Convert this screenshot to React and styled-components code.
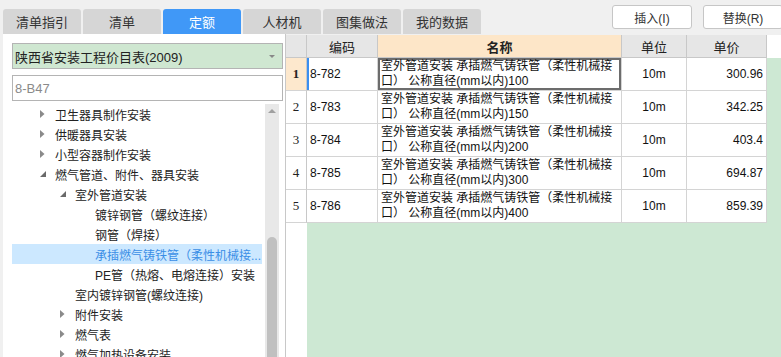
import styled, { createGlobalStyle } from "styled-components";

const GlobalStyle = createGlobalStyle`
  html, body {
    margin: 0;
    padding: 0;
    background: #f0f0f0;
    font-family: "Liberation Sans", "Noto Sans CJK SC", sans-serif;
    font-size: 12px;
    color: #222;
  }
`;

const Page = styled.div`
  width: 781px;
  height: 357px;
  display: flex;
  flex-direction: column;
  overflow: hidden;
  background: #f0f0f0;
`;

const TopBar = styled.div`
  height: 34px;
  display: flex;
  padding-left: 3px;
  flex-shrink: 0;
`;

const Tabs = styled.div`
  display: flex;
  align-items: flex-end;
  gap: 2px;
`;

const Tab = styled.div`
  width: 78px;
  height: 25px;
  display: flex;
  align-items: center;
  justify-content: center;
  border-radius: 3px 3px 0 0;
  background: ${(p) => (p.$active ? "#4098f7" : "#d6d6d6")};
  color: ${(p) => (p.$active ? "#fff" : "#333")};
  font-size: 13px;
`;

const Actions = styled.div`
  margin-left: auto;
  margin-right: -2px;
  padding-top: 5px;
  display: flex;
  gap: 11px;
`;

const Button = styled.div`
  width: 78px;
  height: 22px;
  border: 1px solid #c6c6c6;
  border-radius: 3px;
  background: #fff;
  display: flex;
  align-items: center;
  justify-content: center;
  font-size: 12px;
  color: #333;
`;

const Body = styled.div`
  flex: 1;
  display: flex;
  min-height: 0;
`;

const LeftPanel = styled.div`
  margin-left: 3px;
  width: 273px;
  padding: 9px 0 0 9px;
  background: #fff;
  border-right: 1px solid #c8c8c8;
  display: flex;
  flex-direction: column;
`;

const Select = styled.div`
  width: 265px;
  height: 24px;
  border: 1px solid #b4b4b4;
  background: #cfe7d1;
  display: flex;
  align-items: center;
  padding: 0 2px;
  box-sizing: content-box;
  font-size: 13px;
  margin-left: 0;
  position: relative;
  & > span {
    flex: 1;
  }
`;

const Caret = styled.i`
  width: 0;
  height: 0;
  border-left: 3px solid transparent;
  border-right: 3px solid transparent;
  border-top: 3px solid #888;
  margin-right: 5px;
`;

const SearchBox = styled.div`
  margin-top: 6px;
  width: 265px;
  height: 24px;
  border: 1px solid #b4b4b4;
  padding: 0 2px;
  display: flex;
  align-items: center;
  color: #8a8a8a;
  font-size: 13px;
  box-sizing: content-box;
`;

const TreeArea = styled.div`
  margin-top: 3px;
  flex: 1;
  display: flex;
  min-height: 0;
`;

const TreeList = styled.div`
  width: 250px;
  display: flex;
  flex-direction: column;
`;

const TreeRow = styled.div`
  height: 20px;
  flex-shrink: 0;
  display: flex;
  align-items: center;
  padding-left: ${(p) => 28 + p.$level * 20}px;
  background: ${(p) => (p.$selected ? "#cce8ff" : "transparent")};
  color: ${(p) => (p.$selected ? "#3a8ee6" : "#222")};
  font-size: 12px;
  white-space: nowrap;
`;

const Toggle = styled.span`
  width: 15px;
  flex-shrink: 0;
  display: flex;
  align-items: center;
`;

const ScrollBar = styled.div`
  margin-left: 3px;
  width: 14px;
  background: #e8e8e8;
  display: flex;
  flex-direction: column;
  align-items: center;
`;

const ScrollArrow = styled.i`
  margin-top: 5px;
  width: 0;
  height: 0;
  border-left: 4px solid transparent;
  border-right: 4px solid transparent;
  border-bottom: 4px solid #a0a0a0;
`;

const ScrollThumb = styled.div`
  margin-top: 124px;
  width: 10px;
  flex: 1;
  border-radius: 5px 5px 0 0;
  background: #c0c0c0;
`;

const RightPanel = styled.div`
  flex: 1;
  display: flex;
  flex-direction: column;
  background: #fff;
  margin-top: 1px;
`;

const Grid = styled.div`
  display: grid;
  grid-template-columns: 21px 71px 244px 65px 80px 1fr;
`;

const HeadCell = styled.div`
  height: 22px;
  display: flex;
  align-items: center;
  justify-content: center;
  background: ${(p) => (p.$hot ? "#fde6c8" : "#e6e6e6")};
  font-weight: ${(p) => (p.$hot ? 700 : 400)};
  border-right: 1px solid #c8c8c8;
  border-bottom: 1px solid #c8c8c8;
  font-size: 13px;
  color: #222;
`;

const HeadFill = styled.div`
  background: #fff;
`;

const NumCell = styled.div`
  height: 32px;
  display: flex;
  align-items: center;
  justify-content: center;
  background: ${(p) => (p.$active ? "#fde8cd" : "#fff")};
  font-family: "Liberation Serif", serif;
  font-size: 13px;
  font-weight: ${(p) => (p.$active ? 700 : 400)};
  border-right: 1px solid #c8c8c8;
  border-bottom: 1px solid #d4d4d4;
`;

const Cell = styled.div`
  height: 32px;
  display: flex;
  align-items: center;
  justify-content: ${(p) => p.$align || "flex-start"};
  padding: 0 3px;
  border-right: 1px solid #d4d4d4;
  border-bottom: 1px solid #d4d4d4;
  font-size: 12px;
  line-height: 15px;
  color: #111;
  overflow: hidden;
  box-shadow: ${(p) =>
    p.$mark ? "inset 2px 0 #3b8ef0" : p.$focus ? "inset 0 0 0 2px #6c6c6c" : "none"};
`;

const NameText = styled.div`
  white-space: pre;
`;

const RowFill = styled.div`
  background: #cde8d3;
`;

const Filler = styled.div`
  flex: 1;
  display: flex;
`;

const FillerNum = styled.div`
  width: 21px;
  background: #fff;
`;

const FillerData = styled.div`
  flex: 1;
  background: #cde8d3;
`;

const tabs = ["清单指引", "清单", "定额", "人材机", "图集做法", "我的数据"];

const tree = [
  { level: 0, label: "卫生器具制作安装", state: "closed" },
  { level: 0, label: "供暖器具安装", state: "closed" },
  { level: 0, label: "小型容器制作安装", state: "closed" },
  { level: 0, label: "燃气管道、附件、器具安装", state: "open" },
  { level: 1, label: "室外管道安装", state: "open" },
  { level: 2, label: "镀锌钢管（螺纹连接）" },
  { level: 2, label: "钢管（焊接）" },
  { level: 2, label: "承插燃气铸铁管（柔性机械接...", selected: true },
  { level: 2, label: "PE管（热熔、电熔连接）安装" },
  { level: 1, label: "室内镀锌钢管(螺纹连接)" },
  { level: 1, label: "附件安装", state: "closed" },
  { level: 1, label: "燃气表", state: "closed" },
  { level: 1, label: "燃气加热设备安装", state: "closed" },
];

const rows = [
  { code: "8-782", size: "100", price: "300.96" },
  { code: "8-783", size: "150", price: "342.25" },
  { code: "8-784", size: "200", price: "403.4" },
  { code: "8-785", size: "300", price: "694.87" },
  { code: "8-786", size: "400", price: "859.39" },
];

const ToggleIcon = ({ state }) => {
  if (state === "closed") {
    return (
      <svg width="5" height="8" viewBox="0 0 5 8">
        <path d="M0 0 L4.5 4 L0 8 Z" fill="#8a8a8a" />
      </svg>
    );
  }
  if (state === "open") {
    return (
      <svg width="6" height="6" viewBox="0 0 6 6">
        <path d="M6 0 L6 6 L0 6 Z" fill="#6a6a6a" />
      </svg>
    );
  }
  return null;
};

export default function App() {
  return (
    <>
      <GlobalStyle />
      <Page>
        <TopBar>
          <Tabs>
            {tabs.map((t) => (
              <Tab key={t} $active={t === "定额"}>
                {t}
              </Tab>
            ))}
          </Tabs>
          <Actions>
            <Button>插入(I)</Button>
            <Button>替换(R)</Button>
          </Actions>
        </TopBar>
        <Body>
          <LeftPanel>
            <Select>
              <span>陕西省安装工程价目表(2009)</span>
              <Caret />
            </Select>
            <SearchBox>8-B47</SearchBox>
            <TreeArea>
              <TreeList>
                {tree.map((n, i) => (
                  <TreeRow key={i} $level={n.level} $selected={n.selected}>
                    <Toggle>
                      <ToggleIcon state={n.state} />
                    </Toggle>
                    {n.label}
                  </TreeRow>
                ))}
              </TreeList>
              <ScrollBar>
                <ScrollArrow />
                <ScrollThumb />
              </ScrollBar>
            </TreeArea>
          </LeftPanel>
          <RightPanel>
            <Grid>
              <HeadCell />
              <HeadCell>编码</HeadCell>
              <HeadCell $hot>名称</HeadCell>
              <HeadCell>单位</HeadCell>
              <HeadCell>单价</HeadCell>
              <HeadFill />
              {rows.map((r, i) => (
                <Row key={r.code} row={r} index={i} />
              ))}
            </Grid>
            <Filler>
              <FillerNum />
              <FillerData />
            </Filler>
          </RightPanel>
        </Body>
      </Page>
    </>
  );
}

function Row({ row, index }) {
  const active = index === 0;
  return (
    <>
      <NumCell $active={active}>{index + 1}</NumCell>
      <Cell $mark={active}>{row.code}</Cell>
      <Cell $focus={active}>
        <NameText>
          {"室外管道安装 承插燃气铸铁管（柔性机械接\n口） 公称直径(mm以内)" + row.size}
        </NameText>
      </Cell>
      <Cell $align="center">10m</Cell>
      <Cell $align="flex-end">{row.price}</Cell>
      <RowFill />
    </>
  );
}
